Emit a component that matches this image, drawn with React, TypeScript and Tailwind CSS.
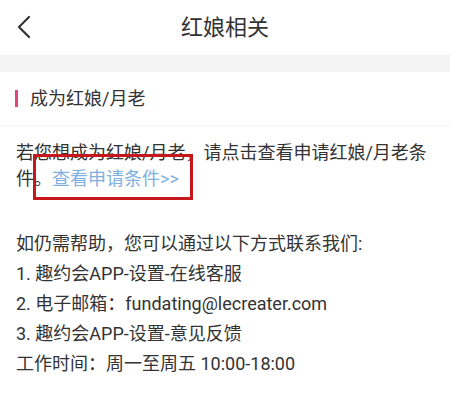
import React from "react";

export default function App() {
  return (
    <div
      className="relative w-[450px] h-[411px] bg-white overflow-hidden text-[#333]"
      style={{ fontFamily: 'Roboto, "Noto Sans CJK SC", sans-serif' }}
    >
      <div className="relative h-[55px] flex items-center justify-center">
        <svg
          className="absolute left-[15px] top-[15px]"
          width="18"
          height="24"
          viewBox="0 0 18 24"
          fill="none"
        >
          <path d="M14 2 L4 12 L14 22" stroke="#333" strokeWidth="2.2" strokeLinecap="round" strokeLinejoin="round" />
        </svg>
        <span className="text-[22px] leading-none text-[#333]">红娘相关</span>
      </div>
      <div className="h-[17px] bg-[#f3f3f3]" />
      <div className="h-[54px] flex items-center border-b border-[#f6f6f6]">
        <div className="ml-[15px] w-[3px] h-[17px] bg-[#e0457b]" />
        <span className="ml-[12px] text-[18px] leading-none">成为红娘/月老</span>
      </div>
      <p className="mt-[14px] px-4 text-[18px] leading-[26px]">
        若您想成为红娘/月老，请点击查看申请红娘/月老条件。
        <span className="text-[#7fb0e2]">查看申请条件&gt;&gt;</span>
      </p>
      <div className="mt-[37px] px-4 text-[18px] leading-[30px]">
        <div>如仍需帮助，您可以通过以下方式联系我们:</div>
        <div>1. 趣约会APP-设置-在线客服</div>
        <div>2. 电子邮箱：fundating@lecreater.com</div>
        <div>3. 趣约会APP-设置-意见反馈</div>
        <div>工作时间：周一至周五 10:00-18:00</div>
      </div>
      <div className="absolute left-[33px] top-[154px] w-[160px] h-[46px] border-[3px] border-[#c8161d]" />
    </div>
  );
}
